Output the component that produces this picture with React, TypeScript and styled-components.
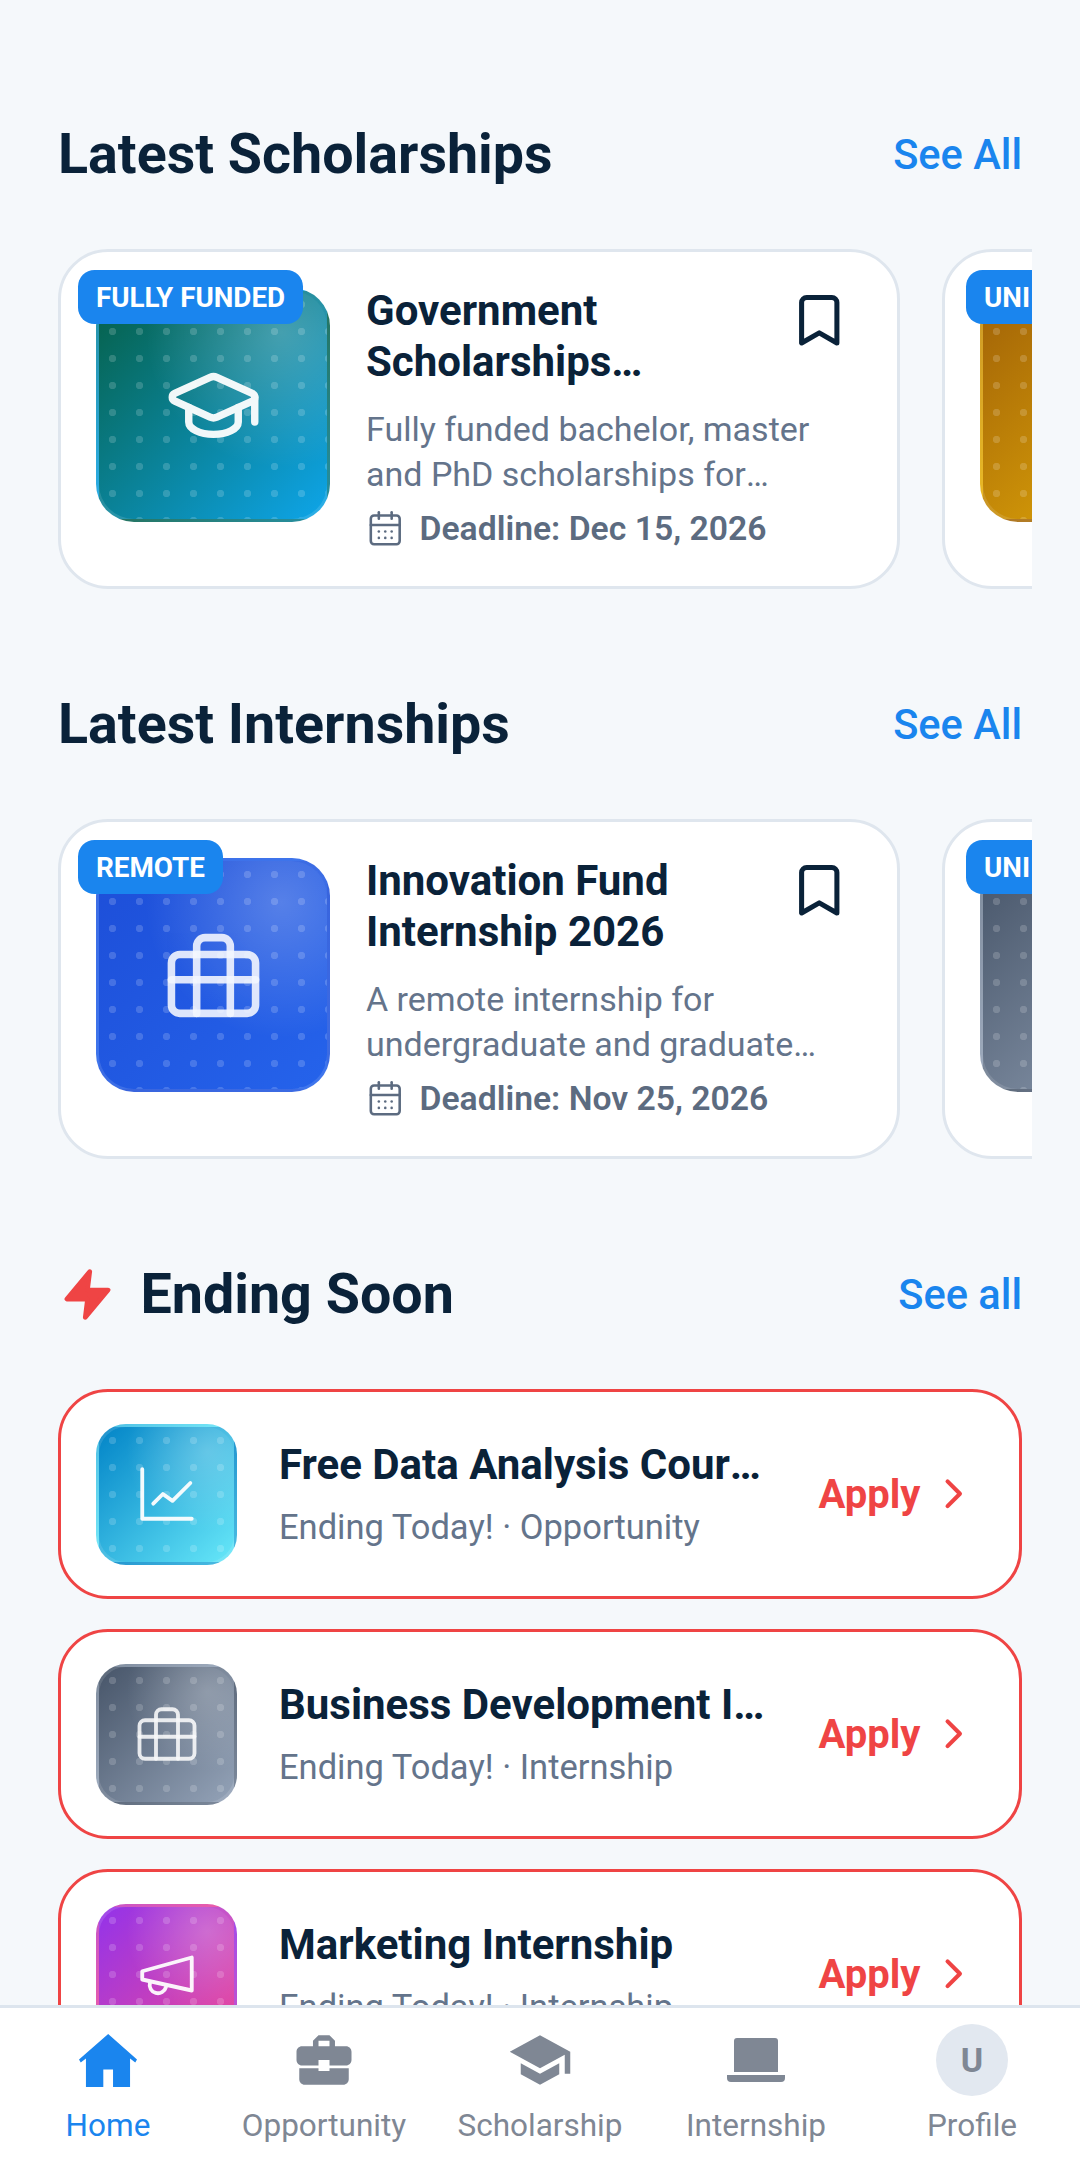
import React from "react";
import styled, { createGlobalStyle } from "styled-components";
import { Bookmark, CalendarDays, ChevronRight, GraduationCap } from "lucide-react";
import { MdBusinessCenter, MdSchool } from "react-icons/md";

const GlobalStyle = createGlobalStyle`
    html, body {
        margin: 0;
        padding: 0;
        height: 2160px;
        overflow: hidden;
        background: #f5f8fb;
        font-family: Roboto, "Liberation Sans", sans-serif;
    }
    * { box-sizing: border-box; }
`;

const Screen = styled.div`
    width: 1080px;
    height: 2160px;
    display: flex;
    flex-direction: column;
    background: #f5f8fb;
`;

const Main = styled.main`
    flex: 1;
    min-height: 0;
    overflow: hidden;
    padding: 121px 58px 0;
`;

const Section = styled.section`
    margin-bottom: 102px;
`;

const SectionHeader = styled.div`
    height: 66px;
    display: flex;
    align-items: center;
    justify-content: space-between;
    margin-bottom: 62px;
`;

const HeadingGroup = styled.div`
    display: flex;
    align-items: center;
    gap: 26px;
    padding-left: 1.5px;
    color: #ef4444;
`;

const Heading = styled.h2`
    margin: 0;
    font-size: 55.6px;
    line-height: 66px;
    font-weight: 700;
    color: #0a2239;
`;

const SeeAll = styled.a`
    font-size: 41.6px;
    font-weight: 500;
    color: #1a85ee;
`;

const Rail = styled.div`
    display: flex;
    gap: 42px;
    width: 974px;
    overflow: hidden;
`;

const Card = styled.article`
    position: relative;
    flex: 0 0 842px;
    height: 340px;
    display: flex;
    gap: 36px;
    padding: 33px 48px 0 35px;
    background: #fff;
    border: 3px solid #dfe6ee;
    border-radius: 50px;
`;

const Badge = styled.span<{ $left: number }>`
    position: absolute;
    z-index: 2;
    left: ${p => p.$left}px;
    top: 18px;
    height: 54px;
    padding: 0 18px;
    display: flex;
    align-items: center;
    font-size: 27.8px;
    font-weight: 700;
    color: #fff;
    background: #1a85ee;
    border-radius: 16.5px;
    white-space: nowrap;
`;

const Thumb = styled.div<{ $size: number; $radius: number; $from: string; $to: string }>`
    position: relative;
    flex: 0 0 ${p => p.$size}px;
    width: ${p => p.$size}px;
    height: ${p => p.$size}px;
    display: flex;
    align-items: center;
    justify-content: center;
    overflow: hidden;
    color: #fff;
    border: 3px solid rgba(255, 255, 255, 0.12);
    border-radius: ${p => p.$radius}px;
    background: linear-gradient(135deg, ${p => p.$from}, ${p => p.$to});

    &::after {
        content: "";
        position: absolute;
        inset: 0;
        background:
            radial-gradient(circle, rgba(255, 255, 255, 0.17) 3.4px, transparent 4px) 0 0 / 27px 27px,
            radial-gradient(circle at 80% 18%, rgba(255, 255, 255, 0.24), transparent 52%);
    }

    svg {
        position: relative;
        z-index: 1;
        opacity: 0.94;
    }
`;

const BigThumb = styled(Thumb)`
    margin-top: 3px;
`;

const CardBody = styled.div`
    flex: 1;
    min-width: 0;
`;

const TitleRow = styled.div`
    display: flex;
    justify-content: space-between;
    align-items: flex-start;
    gap: 20px;
    height: 102px;
    margin-bottom: 20px;
    color: #0a2239;
`;

const CardTitle = styled.h3`
    margin: 0;
    width: 320px;
    font-size: 42px;
    line-height: 51px;
    font-weight: 700;
    color: #0a2239;
    display: -webkit-box;
    -webkit-box-orient: vertical;
    -webkit-line-clamp: 2;
    overflow: hidden;
`;

const Desc = styled.p`
    margin: 0 0 11px;
    font-size: 34px;
    line-height: 45px;
    height: 90px;
    color: #64748b;
    display: -webkit-box;
    -webkit-box-orient: vertical;
    -webkit-line-clamp: 2;
    overflow: hidden;
`;

const Deadline = styled.div`
    display: flex;
    align-items: center;
    gap: 15px;
    height: 40px;
    font-size: 33.7px;
    font-weight: 600;
    color: #5c6b80;
`;

const RowList = styled.div`
    display: flex;
    flex-direction: column;
    gap: 30px;
`;

const Row = styled.article`
    flex: 0 0 210px;
    height: 210px;
    display: flex;
    align-items: center;
    gap: 42px;
    padding: 0 41px 0 35px;
    background: #fff;
    border: 3px solid #ef4444;
    border-radius: 50px;
`;

const RowText = styled.div`
    flex: 1;
    min-width: 0;
    padding-top: 2px;
`;

const RowTitle = styled.h3`
    margin: 0 0 15px;
    font-size: 42px;
    line-height: 50px;
    font-weight: 700;
    color: #0a2239;
    white-space: nowrap;
    overflow: hidden;
    text-overflow: ellipsis;
`;

const RowSub = styled.div`
    font-size: 34.5px;
    line-height: 45px;
    color: #64748b;
`;

const Apply = styled.div`
    display: flex;
    align-items: center;
    gap: 8px;
    margin-left: 4px;
    font-size: 40px;
    font-weight: 700;
    color: #ef4444;
`;

const Nav = styled.nav`
    flex: 0 0 155px;
    display: grid;
    grid-template-columns: repeat(5, 1fr);
    background: #fff;
    border-top: 3px solid #dde5ee;
`;

const NavItem = styled.div<{ $active?: boolean }>`
    display: flex;
    flex-direction: column;
    align-items: center;
    color: ${p => (p.$active ? "#1a85ee" : "#7f8794")};
`;

const NavIcon = styled.div`
    height: 74px;
    margin-top: 15px;
    display: flex;
    align-items: center;
    justify-content: center;
`;

const NavLabel = styled.span`
    margin-top: 9px;
    font-size: 31.5px;
    line-height: 40px;
`;

const Avatar = styled.div`
    width: 72px;
    height: 72px;
    border-radius: 50%;
    display: flex;
    align-items: center;
    justify-content: center;
    background: #e2e8f0;
    font-size: 34px;
    font-weight: 700;
`;

// briefcase with the handle running through the body, strokes overlap on purpose
const Case = ({ size, weight }: { size: number; weight: number }) => (
    <svg width={size} height={size} viewBox="0 0 24 24" fill="none" stroke="#fff" strokeOpacity="0.9" strokeWidth={weight} strokeLinecap="round" strokeLinejoin="round">
        <rect x="2" y="7" width="20" height="14" rx="2" />
        <path d="M16 21V5a2 2 0 0 0-2-2h-4a2 2 0 0 0-2 2v16" />
        <path d="M2 13h20" />
    </svg>
);

const Chart = ({ size }: { size: number }) => (
    <svg width={size} height={size} viewBox="0 0 24 24" fill="none" stroke="#fff" strokeWidth="1.4" strokeLinecap="round" strokeLinejoin="round">
        <path d="M3 3v18h18" />
        <path d="M7 15.5 10.5 12l3.5 2.5L20.5 8" />
    </svg>
);

const Horn = ({ size }: { size: number }) => (
    <svg width={size} height={size} viewBox="0 0 24 24" fill="none" stroke="#fff" strokeWidth="1.4" strokeLinecap="round" strokeLinejoin="round">
        <path d="m3 11 18-5v12L3 14v-3z" />
        <path d="M11.6 16.8a3 3 0 1 1-5.8-1.6" />
    </svg>
);

const Bolt = () => (
    <svg width="55" height="55" viewBox="0 0 24 24" fill="#ef4444" stroke="#ef4444" strokeWidth="2" strokeLinecap="round" strokeLinejoin="round">
        <polygon points="13 2 3 14 12 14 11 22 21 10 12 10 13 2" />
    </svg>
);

const HomeIcon = () => (
    <svg width="58" height="53" viewBox="0 0 167 152" fill="currentColor">
        <path d="M84 0 167 73 162 82 147 70V152H98V102H70V152H20V70L5 82 0 73z" />
    </svg>
);

const LaptopIcon = () => (
    <svg width="58" height="44" viewBox="0 0 58 44" fill="currentColor">
        <path d="M7 3a3 3 0 0 1 3-3h38a3 3 0 0 1 3 3v31H7z" />
        <path d="M0 37h58v3a4 4 0 0 1-4 4H4a4 4 0 0 1-4-4z" />
    </svg>
);

const gradients = {
    teal: ["#065f46", "#0ea5e9"],
    amber: ["#a16207", "#eab308"],
    blue: ["#1d4ed8", "#2563eb"],
    slate: ["#475569", "#94a3b8"],
    cyan: ["#0284c7", "#67e8f9"],
    purple: ["#9333ea", "#ec4899"],
};

interface FeatureData {
    badge: string;
    badgeLeft: number;
    title: string;
    desc: string;
    deadline: string;
    colors: string[];
    icon: React.ReactNode;
}

const Feature: React.FC<{ item: FeatureData }> = ({ item }) => (
    <Card>
        <Badge $left={item.badgeLeft}>{item.badge}</Badge>
        <BigThumb $size={234} $radius={38} $from={item.colors[0]} $to={item.colors[1]}>
            {item.icon}
        </BigThumb>
        <CardBody>
            <TitleRow>
                <CardTitle>{item.title}</CardTitle>
                <Bookmark size={60.5} strokeWidth={2} style={{ flexShrink: 0, marginTop: 5 }} />
            </TitleRow>
            <Desc>{item.desc}</Desc>
            <Deadline>
                <CalendarDays size={38.5} strokeWidth={1.6} />
                {item.deadline}
            </Deadline>
        </CardBody>
    </Card>
);

const scholarships: FeatureData[] = [
    {
        badge: "FULLY FUNDED",
        badgeLeft: 17,
        title: "Government Scholarships Internationally",
        desc: "Fully funded bachelor, master and PhD scholarships for international students worldwide",
        deadline: "Deadline: Dec 15, 2026",
        colors: gradients.teal,
        icon: <GraduationCap size={99} strokeWidth={1.8} />,
    },
    {
        badge: "UNI GRANT",
        badgeLeft: 21,
        title: "University Merit Award",
        desc: "Merit based awards for high achieving students",
        deadline: "Deadline: Jan 10, 2027",
        colors: gradients.amber,
        icon: <GraduationCap size={99} strokeWidth={1.8} />,
    },
];

const internships: FeatureData[] = [
    {
        badge: "REMOTE",
        badgeLeft: 17,
        title: "Innovation Fund Internship 2026",
        desc: "A remote internship for undergraduate and graduate students in every field of study",
        deadline: "Deadline: Nov 25, 2026",
        colors: gradients.blue,
        icon: <Case size={101} weight={1.8} />,
    },
    {
        badge: "UNI GRANT",
        badgeLeft: 21,
        title: "University Research Internship",
        desc: "Paid research placements with partner labs",
        deadline: "Deadline: Dec 01, 2026",
        colors: gradients.slate,
        icon: <Case size={101} weight={1.8} />,
    },
];

const ending = [
    { title: "Free Data Analysis Course for Beginners", sub: "Ending Today! · Opportunity", colors: gradients.cyan, icon: <Chart size={66} /> },
    { title: "Business Development Internship", sub: "Ending Today! · Internship", colors: gradients.slate, icon: <Case size={66} weight={1.4} /> },
    { title: "Marketing Internship", sub: "Ending Today! · Internship", colors: gradients.purple, icon: <Horn size={66} /> },
];

const App: React.FC = () => (
    <Screen>
        <GlobalStyle />
        <Main>
            <Section>
                <SectionHeader>
                    <Heading>Latest Scholarships</Heading>
                    <SeeAll>See All</SeeAll>
                </SectionHeader>
                <Rail>
                    {scholarships.map(s => <Feature key={s.title} item={s} />)}
                </Rail>
            </Section>
            <Section>
                <SectionHeader>
                    <Heading>Latest Internships</Heading>
                    <SeeAll>See All</SeeAll>
                </SectionHeader>
                <Rail>
                    {internships.map(s => <Feature key={s.title} item={s} />)}
                </Rail>
            </Section>
            <SectionHeader>
                <HeadingGroup>
                    <Bolt />
                    <Heading>Ending Soon</Heading>
                </HeadingGroup>
                <SeeAll>See all</SeeAll>
            </SectionHeader>
            <RowList>
                {ending.map(r => (
                    <Row key={r.title}>
                        <Thumb $size={141} $radius={30} $from={r.colors[0]} $to={r.colors[1]}>
                            {r.icon}
                        </Thumb>
                        <RowText>
                            <RowTitle>{r.title}</RowTitle>
                            <RowSub>{r.sub}</RowSub>
                        </RowText>
                        <Apply>
                            Apply
                            <ChevronRight size={49.5} strokeWidth={2} />
                        </Apply>
                    </Row>
                ))}
            </RowList>
        </Main>
        <Nav>
            <NavItem $active>
                <NavIcon><HomeIcon /></NavIcon>
                <NavLabel>Home</NavLabel>
            </NavItem>
            <NavItem>
                <NavIcon><MdBusinessCenter size={66} /></NavIcon>
                <NavLabel>Opportunity</NavLabel>
            </NavItem>
            <NavItem>
                <NavIcon><MdSchool size={66} /></NavIcon>
                <NavLabel>Scholarship</NavLabel>
            </NavItem>
            <NavItem>
                <NavIcon><LaptopIcon /></NavIcon>
                <NavLabel>Internship</NavLabel>
            </NavItem>
            <NavItem>
                <NavIcon><Avatar>U</Avatar></NavIcon>
                <NavLabel>Profile</NavLabel>
            </NavItem>
        </Nav>
    </Screen>
);

export default App;
